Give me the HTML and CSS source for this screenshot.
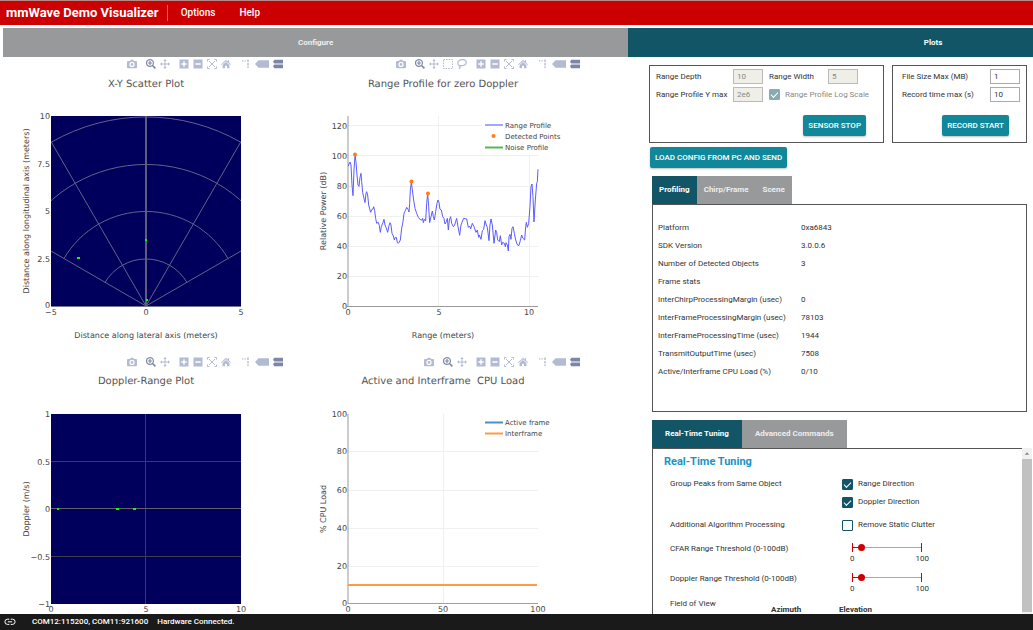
FILE: index.html
```html
<!DOCTYPE html>
<html lang="en">
<head>
<meta charset="utf-8">
<title>mmWave Demo Visualizer</title>
<link rel="stylesheet" href="styles.css">
</head>
<body>
<svg class="sprite" aria-hidden="true">
  <symbol id="i-camera" viewBox="0 0 10 10"><path fill-rule="evenodd" d="M1 2h2l.8-1.3h2.4L7 2h2a1 1 0 0 1 1 1v5.2a1 1 0 0 1-1 1H1a1 1 0 0 1-1-1V3a1 1 0 0 1 1-1zM5 2.8a2.6 2.6 0 1 0 0 5.2 2.6 2.6 0 0 0 0-5.2zM5 4a1.4 1.4 0 1 1 0 2.8A1.4 1.4 0 0 1 5 4z"/></symbol>
  <symbol id="i-zoom" viewBox="0 0 10 10"><path fill-rule="evenodd" d="M4 0a4 4 0 0 1 3.3 6.2L10 8.8 8.8 10 6.2 7.3A4 4 0 1 1 4 0zm0 1.2a2.8 2.8 0 1 0 0 5.6 2.8 2.8 0 0 0 0-5.6zM3.4 2.1h1.2v1.3h1.3v1.2H4.6v1.3H3.4V4.6H2.1V3.4h1.3z"/></symbol>
  <symbol id="i-pan" viewBox="0 0 10 10"><path d="M5 0l1.700 2H5.500v2.500H8V3.300L10 5 8 6.700V5.500H5.500V8h1.200L5 10 3.300 8h1.200V5.500H2v1.200L0 5l2-1.700v1.200h2.500V2H3.300z"/></symbol>
  <symbol id="i-select" viewBox="0 0 10 10"><path fill="none" stroke="currentColor" stroke-dasharray="1.500 1.100" d="M.5.5h9v9h-9z"/></symbol>
  <symbol id="i-lasso" viewBox="0 0 10 10"><path fill="none" stroke="currentColor" stroke-width="1.200" d="M2.500 6.500C.3 5.500.2 3 2.200 1.600 4.500 0 8 .4 9 2.200c1 2-.8 4.300-3.500 4.500-1.500.1-2.800-.6-3.200.3-.3.9 1.200 1 .8 1.700-.2.500-.8.7-1.200.8"/></symbol>
  <symbol id="i-plus" viewBox="0 0 10 10"><path fill-rule="evenodd" d="M.5.5h9v9h-9zM4.300 2.300v2h-2v1.400h2v2h1.400v-2h2V4.300h-2v-2z"/></symbol>
  <symbol id="i-minus" viewBox="0 0 10 10"><path fill-rule="evenodd" d="M.5.5h9v9h-9zM2.300 4.300v1.400h5.400V4.300z"/></symbol>
  <symbol id="i-auto" viewBox="0 0 10 10"><path fill="none" stroke="currentColor" d="M.5 2.500v-2h2M7.500.5h2v2M9.500 7.500v2h-2M2.500 9.500h-2v-2M2 2l6 6M8 2L2 8"/></symbol>
  <symbol id="i-home" viewBox="0 0 10 10"><path d="M5 .8l1.800 1.700V1.300h1.300v2.500L10 5.500l-.6.6L5 2.200.6 6.100 0 5.500zM5 3l3.400 3v3.300H6V6.800H4v2.500H1.600V6z"/></symbol>
  <symbol id="i-spike" viewBox="0 0 10 10"><path d="M1 1.300h1.300v1.300H1zM3.500 1.300h1.300v1.300H3.500zM6.300.5h1.400v2.600H6.300zM6.300 4h1.400v2.500H6.300zM6.300 7.600h1.400V9H6.300z"/></symbol>
  <symbol id="i-tag" viewBox="0 0 14 10"><path d="M0 5l3.500-3.800H14v7.600H3.500z"/></symbol>
  <symbol id="i-bars" viewBox="0 0 10 10"><path d="M0 2.700L1.300.8H10v3.700H1.300zM0 7.300l1.300-1.800H10v3.700H1.300z"/></symbol>
</svg>

<header class="topbar">
  <h1 class="brand">mmWave Demo Visualizer</h1>
  <button class="menu">Options</button>
  <button class="menu">Help</button>
</header>

<nav class="pages">
  <button class="page">Configure</button>
  <button class="page active">Plots</button>
</nav>

<main class="content">
  <section class="charts">
    <figure class="chart">
      <div class="modebar">
        <div class="tools"><button aria-label="Download plot"><svg><use href="#i-camera"/></svg></button></div>
        <div class="tools"><button class="on" aria-label="Zoom"><svg><use href="#i-zoom"/></svg></button><button aria-label="Pan"><svg><use href="#i-pan"/></svg></button></div>
        <div class="tools"><button aria-label="Zoom in"><svg><use href="#i-plus"/></svg></button><button aria-label="Zoom out"><svg><use href="#i-minus"/></svg></button><button aria-label="Autoscale"><svg><use href="#i-auto"/></svg></button><button aria-label="Reset axes"><svg><use href="#i-home"/></svg></button></div>
        <div class="tools"><button aria-label="Spike lines"><svg><use href="#i-spike"/></svg></button><button class="wide" aria-label="Closest data"><svg><use href="#i-tag"/></svg></button><button class="on" aria-label="Compare data"><svg><use href="#i-bars"/></svg></button></div>
      </div>
      <svg class="plot" viewBox="0 0 297 284">
        <clipPath id="xy"><rect x="51" y="45" width="190" height="190"/></clipPath>
        <text class="title" x="146" y="16">X-Y Scatter Plot</text>
        <rect class="field" x="51" y="45" width="190" height="190"/>
        <g class="polar" clip-path="url(#xy)">
          <path d="M105 211.500A47.500 47.500 0 0 1 187 211.500M64 187.500A95 95 0 0 1 228 187.500M23 164A142.500 142.500 0 0 1 269 164M-18 140A190 190 0 0 1 310 140"/>
          <path d="M146 235L51 180M146 235L51 70.500M146 235L241 70.500M146 235L241 180"/>
          <path class="mid" d="M146 45V235"/>
        </g>
        <path class="edge" d="M51 235.500H241"/>
        <g class="hits"><rect x="77" y="186" width="3" height="2"/><rect x="145" y="168" width="2" height="2"/><rect x="146" y="228" width="2" height="2"/></g>
        <g class="ticks end"><text x="50" y="48">10</text><text x="50" y="96">7.5</text><text x="50" y="143">5</text><text x="50" y="191">2.5</text><text x="50" y="237">0</text></g>
        <g class="ticks"><text x="51" y="244">−5</text><text x="146" y="244">0</text><text x="241" y="244">5</text></g>
        <text class="axis" x="146" y="267">Distance along lateral axis (meters)</text>
        <text class="axis" transform="translate(29 140) rotate(-90)">Distance along longitudinal axis (meters)</text>
      </svg>
    </figure>

    <figure class="chart">
      <div class="modebar">
        <div class="tools"><button aria-label="Download plot"><svg><use href="#i-camera"/></svg></button></div>
        <div class="tools"><button class="on" aria-label="Zoom"><svg><use href="#i-zoom"/></svg></button><button aria-label="Pan"><svg><use href="#i-pan"/></svg></button><button aria-label="Box select"><svg><use href="#i-select"/></svg></button><button aria-label="Lasso select"><svg><use href="#i-lasso"/></svg></button></div>
        <div class="tools"><button aria-label="Zoom in"><svg><use href="#i-plus"/></svg></button><button aria-label="Zoom out"><svg><use href="#i-minus"/></svg></button><button aria-label="Autoscale"><svg><use href="#i-auto"/></svg></button><button aria-label="Reset axes"><svg><use href="#i-home"/></svg></button></div>
        <div class="tools"><button aria-label="Spike lines"><svg><use href="#i-spike"/></svg></button><button class="wide" aria-label="Closest data"><svg><use href="#i-tag"/></svg></button><button class="on" aria-label="Compare data"><svg><use href="#i-bars"/></svg></button></div>
      </div>
      <svg class="plot" viewBox="0 0 297 284">
        <text class="title" x="146" y="16">Range Profile for zero Doppler</text>
        <path class="grid" d="M51 54.500H241M51 84.500H241M51 115.500H241M51 145.500H241M51 175.500H241M51 205.500H241M141.500 45V235M232.500 45V235"/>
        <path class="base" d="M51 45V236M50 235.500H241"/>
        <g transform="translate(13 19) scale(.33333)">
          <path class="profile" d="M115 228L117 222 120 216 123 225 126 285 129 317 132 240 135 197 138 215 141 255 144 285 147 289 150 262 153 250 155 275 158 308 162 325 165 338 168 310 170 305 173 315 176 345 182 367 186 358 189 357 191 350 194 362 197 385 200 400 205 397 208 407 211 427 214 410 217 402 219 398 222 388 225 405 228 412 233 427 237 407 240 398 243 405 246 430 250 438 253 450 256 442 259 442 262 458 265 460 268 456 271 450 275 415 279 395 282 370 286 362 290 352 294 358 297 366 299 340 301 300 304 277 307 300 311 330 315 355 320 370 325 382 332 390 336 390 338 385 340 398 343 388 347 393 350 340 353 312 356 350 359 398 363 380 367 363 370 380 373 390 377 365 381 340 384 330 387 337 390 358 394 360 398 380 402 385 405 402 409 395 412 385 415 420 418 390 422 380 425 400 430 410 434 405 440 385 444 410 449 436 453 405 456 397 461 385 470 387 475 412 479 408 482 417 487 400 492 410 498 427 502 420 506 442 508 435 513 448 517 422 521 418 525 392 529 405 532 412 537 452 540 405 543 387 547 405 552 460 557 420 560 428 563 450 568 455 571 437 575 465 578 457 583 460 586 470 588 458 592 465 595 483 597 440 600 433 603 448 606 415 609 410 613 430 617 450 621 462 626 468 631 452 635 435 639 445 644 450 647 410 649 397 652 412 656 400 660 350 663 290 666 282 669 320 672 396 676 330 680 280 682 275 684 238"/>
        </g>
        <rect class="legend-bg" x="185" y="46" width="100" height="38"/>
        <g class="peaks"><circle cx="58" cy="83.500" r="2"/><circle cx="114.500" cy="110.500" r="2"/><circle cx="131" cy="122.500" r="2"/><circle cx="196.500" cy="65" r="2"/></g>
        <path class="key blue" d="M188 54H206"/><path class="key green" d="M188 76.500H206"/>
        <g class="legend"><text x="208" y="57">Range Profile</text><text x="208" y="68">Detected Points</text><text x="208" y="79">Noise Profile</text></g>
        <g class="ticks end"><text x="50" y="58">120</text><text x="50" y="88">100</text><text x="50" y="118">80</text><text x="50" y="148">60</text><text x="50" y="178">40</text><text x="50" y="208">20</text><text x="50" y="238">0</text></g>
        <g class="ticks"><text x="51" y="244">0</text><text x="142" y="244">5</text><text x="232" y="244">10</text></g>
        <text class="axis" x="146" y="267">Range (meters)</text>
        <text class="axis" transform="translate(29 140) rotate(-90)">Relative Power (dB)</text>
      </svg>
    </figure>

    <figure class="chart">
      <div class="modebar">
        <div class="tools"><button aria-label="Download plot"><svg><use href="#i-camera"/></svg></button></div>
        <div class="tools"><button class="on" aria-label="Zoom"><svg><use href="#i-zoom"/></svg></button><button aria-label="Pan"><svg><use href="#i-pan"/></svg></button></div>
        <div class="tools"><button aria-label="Zoom in"><svg><use href="#i-plus"/></svg></button><button aria-label="Zoom out"><svg><use href="#i-minus"/></svg></button><button aria-label="Autoscale"><svg><use href="#i-auto"/></svg></button><button aria-label="Reset axes"><svg><use href="#i-home"/></svg></button></div>
        <div class="tools"><button aria-label="Spike lines"><svg><use href="#i-spike"/></svg></button><button class="wide" aria-label="Closest data"><svg><use href="#i-tag"/></svg></button><button class="on" aria-label="Compare data"><svg><use href="#i-bars"/></svg></button></div>
      </div>
      <svg class="plot" viewBox="0 0 297 284">
        <text class="title" x="146" y="15">Doppler-Range Plot</text>
        <rect class="field" x="51" y="45" width="190" height="190"/>
        <path class="dgrid" d="M51 92.500H241M51 187.500H241M145.500 45V235"/>
        <path class="dzero" d="M51 139.500H241"/>
        <g class="hits"><rect x="57" y="139" width="2" height="2"/><rect x="116" y="139" width="3" height="2"/><rect x="133" y="139" width="3" height="2"/></g>
        <g class="ticks end"><text x="50" y="48">1</text><text x="50" y="96">0.5</text><text x="50" y="143">0</text><text x="50" y="191">−0.5</text><text x="50" y="238">−1</text></g>
        <g class="ticks"><text x="51" y="243">0</text><text x="146" y="243">5</text><text x="241" y="243">10</text></g>
        <text class="axis" transform="translate(29 140) rotate(-90)">Doppler (m/s)</text>
      </svg>
    </figure>

    <figure class="chart">
      <div class="modebar">
        <div class="tools"><button aria-label="Download plot"><svg><use href="#i-camera"/></svg></button></div>
        <div class="tools"><button class="on" aria-label="Zoom"><svg><use href="#i-zoom"/></svg></button><button aria-label="Pan"><svg><use href="#i-pan"/></svg></button></div>
        <div class="tools"><button aria-label="Zoom in"><svg><use href="#i-plus"/></svg></button><button aria-label="Zoom out"><svg><use href="#i-minus"/></svg></button><button aria-label="Autoscale"><svg><use href="#i-auto"/></svg></button><button aria-label="Reset axes"><svg><use href="#i-home"/></svg></button></div>
        <div class="tools"><button aria-label="Spike lines"><svg><use href="#i-spike"/></svg></button><button class="wide" aria-label="Closest data"><svg><use href="#i-tag"/></svg></button><button class="on" aria-label="Compare data"><svg><use href="#i-bars"/></svg></button></div>
      </div>
      <svg class="plot" viewBox="0 0 297 284">
        <text class="title" x="146" y="15">Active and Interframe&nbsp; CPU Load</text>
        <path class="grid" d="M51 82.500H241M51 121.500H241M51 159.500H241M51 197.500H241M146.500 45V235"/>
        <path class="base" d="M51 45V235"/>
        <path class="cpu" d="M51 234.500H241"/>
        <path class="inter" d="M51 216H240"/>
        <rect class="legend-bg" x="185" y="46" width="100" height="27"/>
        <path class="key steel" d="M188 53.500H206"/><path class="key orange" d="M188 64.500H206"/>
        <g class="legend"><text x="208" y="56">Active frame</text><text x="208" y="67">Interframe</text></g>
        <g class="ticks end"><text x="50" y="48">100</text><text x="50" y="85">80</text><text x="50" y="124">60</text><text x="50" y="162">40</text><text x="50" y="200">20</text><text x="50" y="237">0</text></g>
        <g class="ticks"><text x="51" y="243">0</text><text x="146" y="243">50</text><text x="241" y="243">100</text></g>
        <text class="axis" transform="translate(29 140) rotate(-90)">% CPU Load</text>
      </svg>
    </figure>
  </section>

  <section class="side">
    <div class="boxes">
      <form class="box sensor">
        <label for="depth">Range Depth</label>
        <input class="num" id="depth" value="10" disabled>
        <div class="pair"><label for="width">Range Width</label><input class="num" id="width" value="5" disabled></div>
        <label for="ymax">Range Profile Y max</label>
        <input class="num" id="ymax" value="2e6" disabled>
        <label class="check faded"><input type="checkbox" checked disabled>Range Profile Log Scale</label>
        <div class="actions"><button type="button" class="btn">SENSOR STOP</button></div>
      </form>
      <form class="box record">
        <label for="size">File Size Max (MB)</label>
        <input class="num" id="size" value="1">
        <label for="time">Record time max (s)</label>
        <input class="num" id="time" value="10">
        <div class="actions"><button type="button" class="btn">RECORD START</button></div>
      </form>
    </div>
    <button class="btn load">LOAD CONFIG FROM PC AND SEND</button>

    <div class="panel">
      <div class="tabs">
        <button class="tab active">Profiling</button><button class="tab">Chirp/Frame</button><button class="tab">Scene</button>
      </div>
      <div class="sheet profiling">
        <table class="stats">
          <tr><th>Platform</th><td>0xa6843</td></tr>
          <tr><th>SDK Version</th><td>3.0.0.6</td></tr>
          <tr><th>Number of Detected Objects</th><td>3</td></tr>
          <tr><th>Frame stats</th><td></td></tr>
          <tr><th>InterChirpProcessingMargin (usec)</th><td>0</td></tr>
          <tr><th>InterFrameProcessingMargin (usec)</th><td>78103</td></tr>
          <tr><th>InterFrameProcessingTime (usec)</th><td>1944</td></tr>
          <tr><th>TransmitOutputTime (usec)</th><td>7508</td></tr>
          <tr><th>Active/Interframe CPU Load (%)</th><td>0/10</td></tr>
        </table>
      </div>
    </div>

    <div class="panel tuning">
      <div class="tabs roomy">
        <button class="tab active">Real-Time Tuning</button><button class="tab">Advanced Commands</button>
      </div>
      <div class="scroller">
        <div class="controls">
          <h2>Real-Time Tuning</h2>
          <div class="row"><span>Group Peaks from Same Object</span>
            <div class="stack"><label class="check"><input type="checkbox" checked>Range Direction</label><label class="check"><input type="checkbox" checked>Doppler Direction</label></div></div>
          <div class="row"><span>Additional Algorithm Processing</span><label class="check"><input type="checkbox">Remove Static Clutter</label></div>
          <div class="row"><label for="cfar">CFAR Range Threshold (0-100dB)</label>
            <div class="slider"><input id="cfar" type="range" min="0" max="100" value="10"><div class="scale"><span>0</span><span>100</span></div></div></div>
          <div class="row"><label for="dopp">Doppler Range Threshold (0-100dB)</label>
            <div class="slider"><input id="dopp" type="range" min="0" max="100" value="10"><div class="scale"><span>0</span><span>100</span></div></div></div>
          <div class="fov"><span>Field of View</span><b>Azimuth</b><b>Elevation</b></div>
        </div>
        <div class="scrollbar" aria-hidden="true"><svg class="up" viewBox="0 0 11 11"><path d="M3 7l2.500-3L8 7z"/></svg><div class="thumb"></div></div>
      </div>
    </div>
  </section>
</main>

<footer class="status">
  <svg class="link" viewBox="0 0 12 12"><path d="M5.300 3.200H3.500a2.600 2.600 0 0 0 0 5.200h1.800M6.700 3.200h1.800a2.600 2.600 0 0 1 0 5.200H6.700M3.800 5.800h4.400"/></svg>
  <span>COM12:115200, COM11:921600</span><span>Hardware Connected.</span>
</footer>
</body>
</html>
```

FILE: styles.css
```css
* { box-sizing: border-box; }
body {
  margin: 0;
  height: 100vh;
  overflow: hidden;
  display: flex;
  flex-direction: column;
  background: #fff;
  color: #333;
  font: 8px/12px Roboto, "Liberation Sans", sans-serif;
}
button { border: 0; margin: 0; padding: 0; background: none; font: inherit; color: inherit; white-space: nowrap; }
.sprite { display: none; }

.topbar {
  flex: none;
  display: flex;
  align-items: center;
  height: 25px;
  padding-left: 6px;
  border-top: 1px solid #b88;
  background: #c00;
  color: #fff;
}
.brand { margin: 0 7px 0 0; padding-right: 8px; border-right: 1px solid #e06060; font: 700 13px/16px Roboto, sans-serif; }
.menu { margin: 0 18px 0 6px; font: 500 10px/16px Roboto, sans-serif; }

.pages { flex: none; display: flex; height: 29px; margin: 3px 0 0 3px; overflow: hidden; }
.page { flex: 0 0 60.7%; background: #98999b; color: #eee; font-weight: 700; }
.page.active { flex-basis: 59.2%; background: #115566; color: #fff; }

.content { flex: 1; min-height: 0; display: flex; overflow: hidden; }
.charts { flex: none; display: grid; grid-template-columns: 297px 297px; grid-auto-rows: 298px; }
.chart { margin: 0; }
.modebar { display: flex; justify-content: flex-end; align-items: center; gap: 9px; height: 14px; padding-right: 14px; }
.tools { display: flex; gap: 4px; }
.tools:nth-child(3) { padding-right: 1px; }
.tools button { display: block; width: 10px; height: 10px; color: #b3bbd3; }
.tools button.wide { width: 14px; }
.tools button.on { color: #7c87a8; }
.tools svg { display: block; width: 100%; height: 100%; fill: currentColor; }

.plot { display: block; width: 100%; fill: #444; font: 8px "DejaVu Sans", sans-serif; text-rendering: geometricPrecision; }
.plot .title { font-size: 10px; text-anchor: middle; fill: #555; }
.plot .axis { font-size: 8px; text-anchor: middle; }
.ticks { text-anchor: middle; }
.ticks.end { text-anchor: end; }
.legend { font-size: 7px; }
.field { fill: #00005c; }
.polar path { fill: none; stroke: #62628a; }
.polar .mid { stroke: #5c5c7c; stroke-width: 2; }
.edge { stroke: #77778c; }
.hits { fill: #0f0; }
.dgrid { stroke: #3c3c50; }
.dzero { stroke: #60606c; }
.grid { stroke: #f0f0f0; fill: none; }
.base { stroke: #999; fill: none; }
.profile { fill: none; stroke: #5a5aff; stroke-width: 3; stroke-linejoin: round; }
.peaks { fill: #ff7f0e; }
.legend-bg { fill: #fff; }
.key { stroke-width: 2; }
.blue { stroke: #a5a5ff; }
.green { stroke: #5ab55a; }
.steel { stroke: #4a90c4; }
.orange { stroke: #ff9a45; }
.cpu { stroke: #79aacb; }
.inter { stroke: #ff9a45; stroke-width: 2; }

.side { flex: 1; min-width: 0; display: flex; flex-direction: column; align-items: stretch; padding: 8px 0 0 55px; }
.boxes { display: grid; grid-template-columns: minmax(0, 235fr) minmax(0, 135fr); gap: 8px; margin-right: 6px; }
.box { display: grid; gap: 3px 0; align-content: start; align-items: center; height: 78px; padding: 3px 6px; border: 1px solid #555; white-space: nowrap; }
.sensor { grid-template-columns: 77px 36px 1fr; }
.record { grid-template-columns: 1fr 30px; padding-left: 9px; }
.num { width: 30px; height: 15px; padding: 0 3px 1px; border: 1px solid #aaa; background: #fff; color: #333; font: inherit; }
.num:disabled { background: #efefe8; color: #888; border-color: #bbb; }
.pair { display: flex; align-items: center; justify-content: space-between; padding-right: 19px; }
.actions { grid-column: 1 / -1; display: flex; justify-content: flex-end; padding: 10px 11px 0 0; }
.btn { height: 21px; padding: 0 5px; border-radius: 2px; background: #118899; color: #fff; font-weight: 500; box-shadow: 0 1px 2px #8888; }
.load { align-self: flex-start; margin: 4px 0 8px 1px; }

.check { display: flex; align-items: center; gap: 5px; }
.check.faded { color: #888; }
.check input { appearance: none; margin: 0; width: 11px; height: 11px; border: 1px solid #115566; border-radius: 1px; background: #fff; display: grid; }
.check input:checked { background: #115566; }
.check input:checked::before { content: ""; width: 6px; height: 3px; margin: 2px 0 0 1px; border: solid #fff; border-width: 0 0 1px 1px; transform: rotate(-45deg); }
.check input:disabled { background: #88aab3; border-color: #88aab3; }

.panel { margin: 0 6px 0 3px; }
.tabs { display: flex; height: 28px; }
.tab { padding: 0 7px; background: #98999b; color: #eee; font-weight: 700; }
.tab.active { background: #115566; color: #fff; }
.roomy .tab { padding: 0 13px; }
.sheet { border: 1px solid #555; }
.profiling { height: 208px; padding: 14px 5px 0; }
.stats { border-collapse: collapse; line-height: 18px; white-space: nowrap; }
.stats th { width: 143px; padding: 0; text-align: left; font-weight: 400; }
.stats td { padding: 0; }

.tuning { flex: 1; min-height: 0; display: flex; flex-direction: column; margin: 8px 1px 0 3px; }
.tuning .tabs { flex: none; }
.scroller { flex: 1; min-height: 0; display: flex; overflow: hidden; }
.controls { flex: 1; border: solid #555; border-width: 1px 0 0 1px; padding: 5px 0 0 17px; }
.controls h2 { margin: 0 0 9px -6px; color: #1a93c6; font: 700 11px/15px Roboto, sans-serif; }
.row { display: grid; grid-template-columns: 172px 1fr; align-items: start; margin-bottom: 11px; }
.row:nth-last-child(2) { margin-bottom: 4px; }
.row:nth-last-child(3) { margin-bottom: 9px; }
.row:nth-last-child(4) { margin-bottom: 12px; }
.stack { display: grid; gap: 6px; }
.slider { width: 70px; margin-left: 10px; }
.slider input {
  appearance: none;
  display: block;
  width: 70px;
  height: 9px;
  margin: 0;
  background:
    linear-gradient(#c00, #c00) 0 0 / 1px 100% no-repeat,
    linear-gradient(#c00, #c00) 100% 0 / 1px 100% no-repeat,
    linear-gradient(#c00, #c00) 0 50% / 10px 1px no-repeat,
    linear-gradient(#aaa, #aaa) 0 50% / 100% 1px no-repeat;
}
.slider input::-webkit-slider-thumb { appearance: none; width: 7px; height: 7px; border-radius: 50%; background: #c00; }
.scale { display: flex; justify-content: space-between; margin: 2px -7px 0 -2px; line-height: 10px; }
.fov { display: grid; grid-template-columns: 101px 68px 1fr; }
.fov b { padding-top: 6px; font-weight: 700; }
.scrollbar { flex: none; display: flex; flex-direction: column; width: 10px; background: #f1f1f1; }
.up { display: block; width: 10px; height: 11px; fill: #888; }
.thumb { flex: 1; margin-bottom: 2px; background: #c1c1c1; }

.status { flex: none; display: flex; align-items: center; height: 16px; padding-left: 4px; background: #1a1a1a; color: #fff; font-weight: 500; }
.status span { margin-right: 9px; }
.link { width: 12px; height: 12px; margin-right: 16px; fill: none; stroke: #fff; }
```
